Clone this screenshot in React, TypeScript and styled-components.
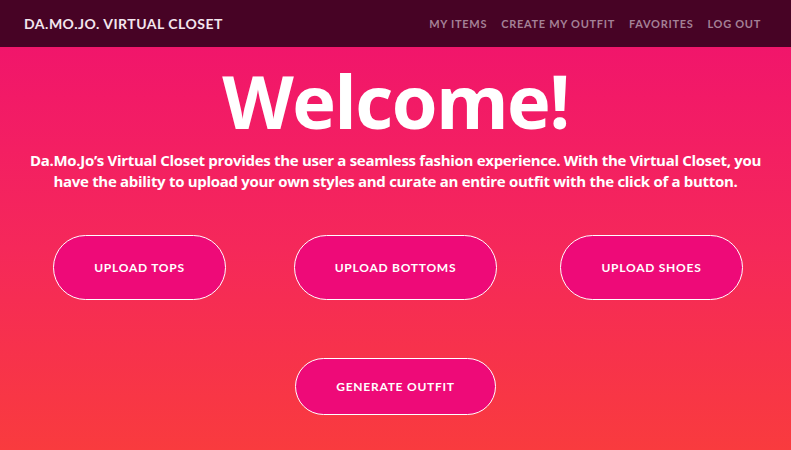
import React from "react";
import styled, { createGlobalStyle } from "styled-components";

const GlobalStyle = createGlobalStyle`
  html, body { margin: 0; padding: 0; }
  body {
    width: 791px;
    min-height: 450px;
    background: linear-gradient(180deg, #f0116f 0%, #f5285a 55%, #f93b3e 100%);
    font-family: "Open Sans", "Noto Sans", sans-serif;
  }
`;

const Page = styled.div`
  min-height: 450px;
  display: flex;
  flex-direction: column;
`;

const NavBar = styled.nav`
  height: 47px;
  background: #470325;
  display: flex;
  align-items: center;
  justify-content: space-between;
  padding: 0 30px 0 24px;
  font-family: "Lato", sans-serif;
`;

const Brand = styled.div`
  color: #f3e6ee;
  font-weight: 700;
  font-size: 14px;
  letter-spacing: 0.5px;
`;

const NavLinks = styled.ul`
  display: flex;
  gap: 14px;
  margin: 0;
  padding: 0;
  list-style: none;
`;

const NavLink = styled.li`
  color: #a48096;
  font-weight: 700;
  font-size: 11px;
  letter-spacing: 0.7px;
`;

const Hero = styled.main`
  display: flex;
  flex-direction: column;
  align-items: center;
  text-align: center;
`;

const Title = styled.h1`
  margin: 6px 0 0;
  color: #ffffff;
  font-family: "Open Sans", sans-serif;
  font-weight: 700;
  font-size: 74px;
  line-height: 96px;
  letter-spacing: -1.6px;
`;

const Intro = styled.p`
  margin: 1px 0 0;
  width: 740px;
  color: #ffffff;
  font-weight: 700;
  font-size: 15px;
  line-height: 21px;
  letter-spacing: -0.3px;
`;

const ButtonRow = styled.div`
  display: grid;
  grid-template-columns: repeat(3, 256px);
  justify-content: center;
  justify-items: center;
  margin-top: 43px;
`;

const SoloRow = styled.div`
  display: flex;
  justify-content: center;
  margin-top: 58px;
`;

const PillButton = styled.button<{ $height: number }>`
  height: ${(p) => p.$height}px;
  padding: 0 40px;
  border: 1px solid #ffffff;
  border-radius: 40px;
  background: #ee0a78;
  color: #ffffff;
  font-family: "Lato", sans-serif;
  font-weight: 700;
  font-size: 12px;
  letter-spacing: 0.75px;
  cursor: pointer;
`;

export default function App() {
  return (
    <>
      <GlobalStyle />
      <Page>
        <NavBar>
          <Brand>DA.MO.JO. VIRTUAL CLOSET</Brand>
          <NavLinks>
            <NavLink>MY ITEMS</NavLink>
            <NavLink>CREATE MY OUTFIT</NavLink>
            <NavLink>FAVORITES</NavLink>
            <NavLink>LOG OUT</NavLink>
          </NavLinks>
        </NavBar>
        <Hero>
          <Title>Welcome!</Title>
          <Intro>
            Da.Mo.Jo’s Virtual Closet provides the user a seamless fashion experience. With the Virtual Closet, you
            have the ability to upload your own styles and curate an entire outfit with the click of a button.
          </Intro>
          <ButtonRow>
            <PillButton $height={65}>UPLOAD TOPS</PillButton>
            <PillButton $height={65}>UPLOAD BOTTOMS</PillButton>
            <PillButton $height={65}>UPLOAD SHOES</PillButton>
          </ButtonRow>
          <SoloRow>
            <PillButton $height={57}>GENERATE OUTFIT</PillButton>
          </SoloRow>
        </Hero>
      </Page>
    </>
  );
}
